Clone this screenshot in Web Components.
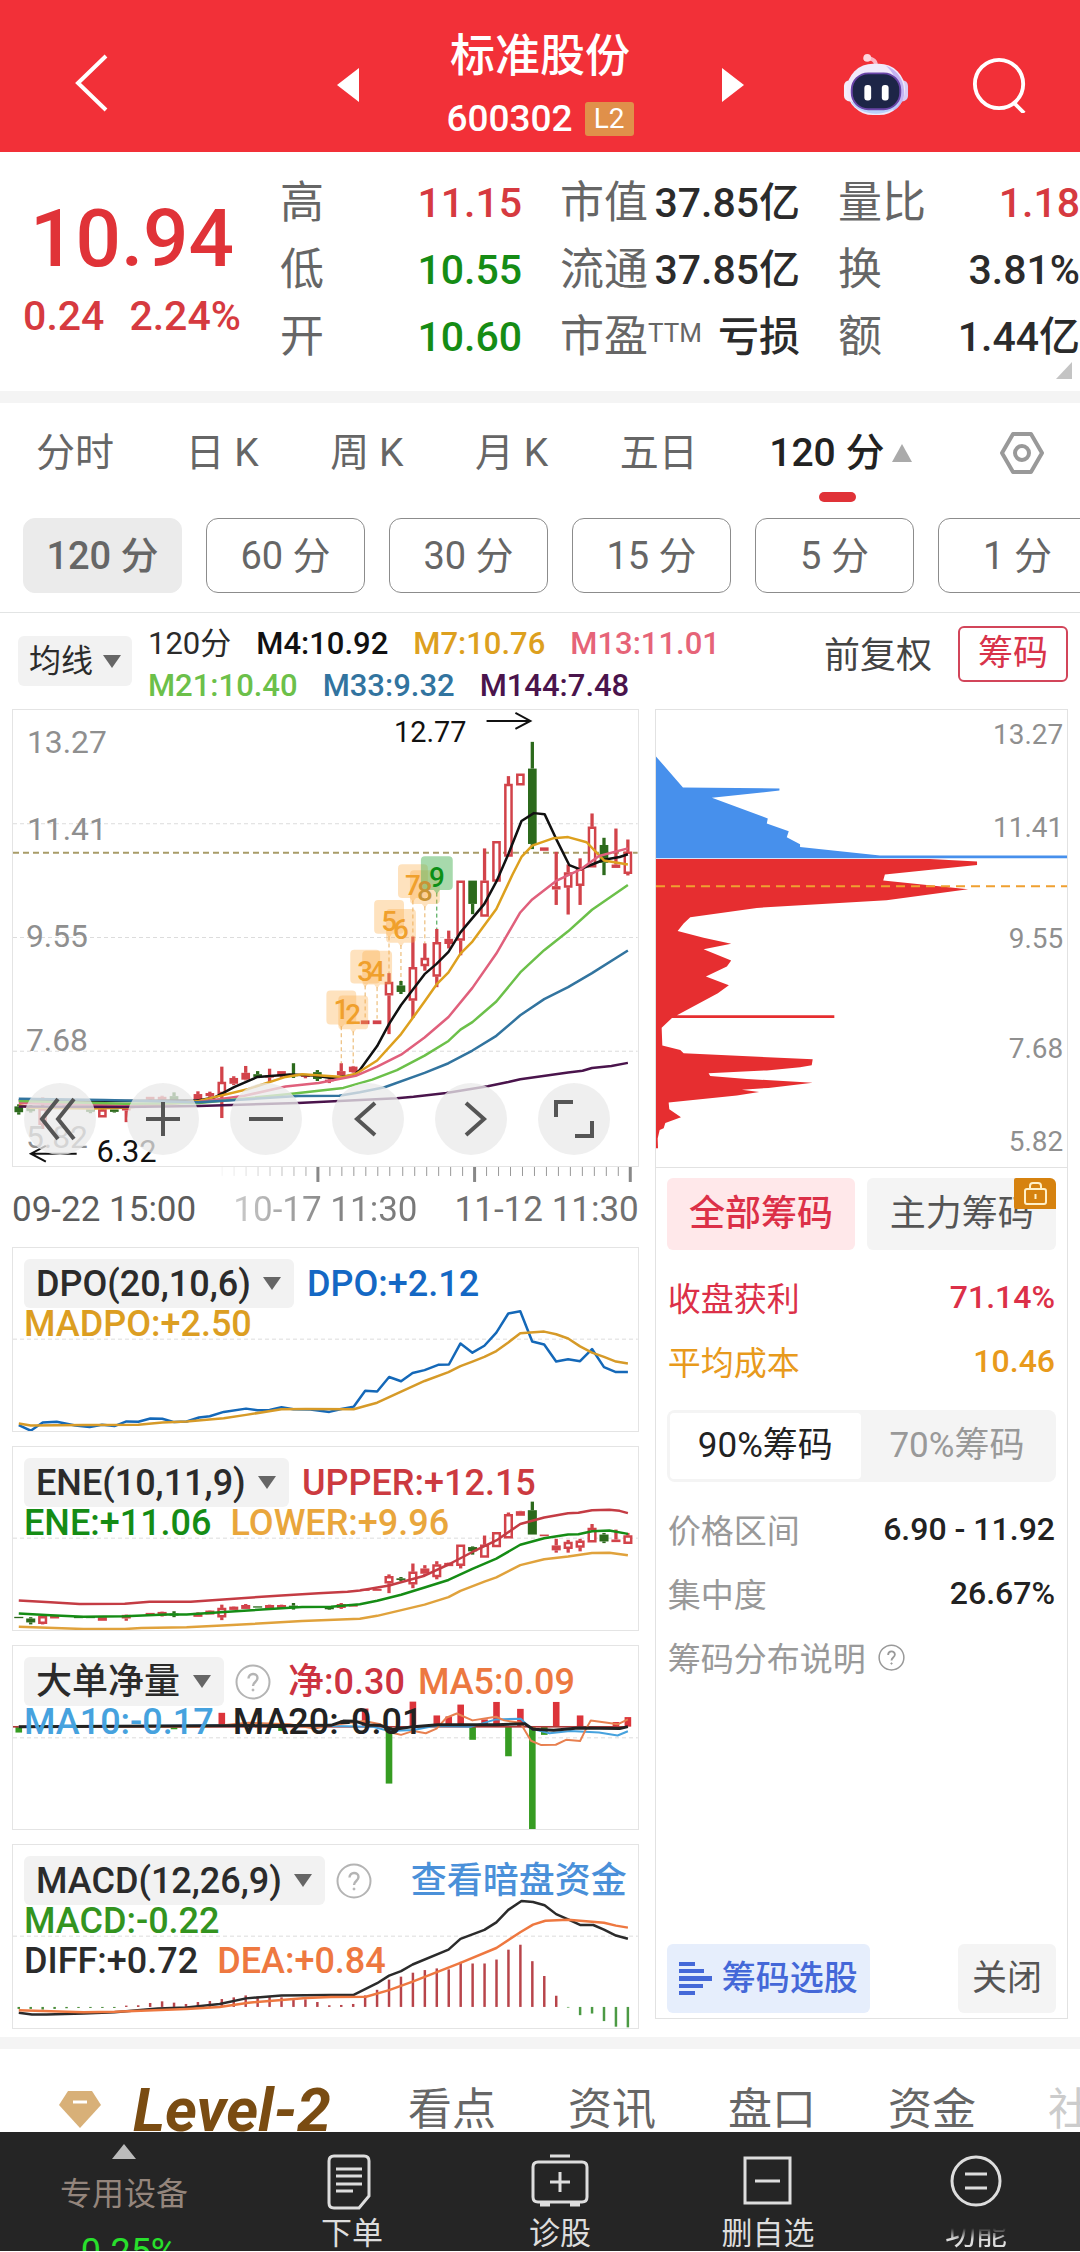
<!DOCTYPE html>
<html lang="zh-CN">
<head>
<meta charset="utf-8">
<meta name="viewport" content="width=device-width, initial-scale=1">
<title>标准股份 600302</title>
<style>
  html { background: #fff; }
  body {
    margin: 0;
    font-family: Roboto, "Noto Sans CJK SC", sans-serif;
    color: #2b2b2b;
    overflow-x: hidden;
  }
  .workspace { display: flex; gap: 16px; padding: 0 12px 0 12px; }
  .left { flex: 628 1 0; min-width: 0; display: flex; flex-direction: column; }
  .panels { display: flex; flex-direction: column; gap: 14px; }
  chip-panel { flex: 412 1 0; min-width: 0; margin-bottom: 10px; }
  .band { height: 12px; background: #f4f4f4; }
  .workspace + .band { margin-top: 8px; }
</style>
</head>
<body>
<app-header name="标准股份" code="600302"></app-header>
<quote-board></quote-board>
<div class="band"></div>
<period-tabs></period-tabs>
<period-pills></period-pills>
<ma-legend></ma-legend>
<div class="workspace">
  <div class="left">
    <k-chart></k-chart>
    <time-axis></time-axis>
    <div class="panels">
      <indicator-panel kind="dpo" name="DPO(20,10,6)">
        <span slot="first" style="color:#1468c4">DPO:+2.12</span>
        <span slot="second" style="color:#dc9e22">MADPO:+2.50</span>
      </indicator-panel>
      <indicator-panel kind="ene" name="ENE(10,11,9)">
        <span slot="first" style="color:#cc3a40">UPPER:+12.15</span>
        <span slot="second" style="color:#158c15">ENE:+11.06</span>
        <span slot="second" style="color:#e9a63c">LOWER:+9.96</span>
      </indicator-panel>
      <indicator-panel kind="net" name="大单净量" help>
        <span slot="first" style="color:#cc3340">净:0.30</span>
        <span slot="first" style="color:#ec7840">MA5:0.09</span>
        <span slot="second" style="color:#46a2de">MA10:-0.17</span>
        <span slot="second" style="color:#222">MA20:-0.01</span>
      </indicator-panel>
      <indicator-panel kind="macd" name="MACD(12,26,9)" help>
        <a slot="first" href="#dark" style="color:#4a90d9;text-decoration:none;margin-left:auto">查看暗盘资金</a>
        <span slot="second" style="color:#33941f">MACD:-0.22</span>
        <span slot="third" style="color:#2b2b2b">DIFF:+0.72</span>
        <span slot="third" style="color:#ee7840">DEA:+0.84</span>
      </indicator-panel>
    </div>
  </div>
  <chip-panel></chip-panel>
</div>
<div class="band"></div>
<section-tabs></section-tabs>
<bottom-nav></bottom-nav>

<script>
const base = `<style>
  :host, *, *::before, *::after { box-sizing: border-box; }
  :host { display: block; }
  button { font: inherit; color: inherit; background: none; border: 0; padding: 0; margin: 0; cursor: pointer; white-space: nowrap; }
  a { color: inherit; text-decoration: none; }
  svg { display: block; }
</style>`;

function define(name, render) {
  customElements.define(name, class extends HTMLElement {
    constructor() { super(); this.attachShadow({ mode: 'open' }); }
    connectedCallback() { this.shadowRoot.innerHTML = base + render(this); }
  });
}

/* ---- drawing helpers: candles sit on a fixed step along x ---- */
const STEP = 28.96, FIRST = 43;
const cx = i => FIRST + STEP * i;
const RED = '#d2434a', GREEN = '#2c6a1c';
function candles(list, w) {
  return list.map(([i, t, hi, top, bot, lo]) => {
    const x = cx(i), c = t === 'g' ? GREEN : RED, h = Math.max(bot - top, 3);
    let s = '';
    if (hi < top) s += `<rect x="${x - 4}" y="${hi}" width="8" height="${top - hi}" fill="${c}"/>`;
    if (lo > bot) s += `<rect x="${x - 4}" y="${bot}" width="8" height="${lo - bot}" fill="${c}"/>`;
    s += t === 'r'
      ? `<rect x="${x - w / 2 + 3}" y="${top + 3}" width="${w - 6}" height="${Math.max(h - 6, 2)}" fill="#fff" stroke="${c}" stroke-width="2.500" vector-effect="non-scaling-stroke"/>`
      : `<rect x="${x - w / 2}" y="${top}" width="${w}" height="${h}" fill="${c}"/>`;
    return s;
  }).join('');
}
const line = (pts, color, w = 2.500) =>
  `<polyline points="${pts}" fill="none" stroke="${color}" stroke-width="${w}" stroke-linejoin="round" vector-effect="non-scaling-stroke"/>`;
const grid = (y, color = '#dcdcdc', w = 1, dash = '4 3') =>
  `<line x1="29" x2="1544" y1="${y}" y2="${y}" stroke="${color}" stroke-width="${w}" stroke-dasharray="${dash}" vector-effect="non-scaling-stroke"/>`;
const helpIcon = size =>
  `<svg class="help" width="${size}" height="${size}" viewBox="0 0 36 36" fill="none" stroke="currentColor" stroke-width="2"><circle cx="18" cy="18" r="16.5"/><path d="M13.500 14.500c0-6 9-6 9-.5 0 4-4.500 4-4.500 8" stroke-width="2.400"/><circle cx="18" cy="26" r="1" fill="currentColor" stroke-width="1"/></svg>`;

define('app-header', el => `
<style>
  :host { background: #f23038; color: #fff; height: 152px; display: grid; grid-template-columns: 1fr 407px 1fr; align-items: center; padding: 18px 52px 0; }
  .back { justify-self: start; padding: 0 0 4px 18px; }
  .mid { display: flex; justify-content: space-between; align-items: center; }
  h1 { margin: 0; font-size: 45px; line-height: 64px; font-weight: 500; text-align: center; }
  .t { display: flex; flex-direction: column; align-items: center; gap: 4px; }
  .code { display: flex; gap: 12px; align-items: center; font-size: 37px; line-height: 52px; font-weight: 500; }
  .l2 { background: #e0904a; font-size: 28px; line-height: 34px; width: 49px; text-align: center; border-radius: 3px; font-weight: 400; }
  .tools { justify-self: end; display: flex; gap: 63px; align-items: center; }
</style>
<button class="back" aria-label="返回"><svg width="40" height="60" viewBox="0 0 40 60" fill="none" stroke="#fff" stroke-width="4"><path d="M36 3 8 30 36 57"/></svg></button>
<div class="mid">
  <button aria-label="上一只"><svg width="22" height="34" viewBox="0 0 22 34"><path d="M22 0v34L0 17z" fill="#fff"/></svg></button>
  <div class="t"><h1>${el.getAttribute('name')}</h1><div class="code"><span>${el.getAttribute('code')}</span><span class="l2">L2</span></div></div>
  <button aria-label="下一只"><svg width="22" height="34" viewBox="0 0 22 34"><path d="M0 0v34L22 17z" fill="#fff"/></svg></button>
</div>
<div class="tools">
  <button aria-label="助手"><svg width="66" height="64" viewBox="0 0 68 64">
    <path d="M34 12c0-6-5-8-11-7" fill="none" stroke="#fbb3c3" stroke-width="4" stroke-linecap="round"/><circle cx="25" cy="4" r="4" fill="#fdd5dd"/>
    <rect x="1" y="27" width="12" height="22" rx="6" fill="#f5eefb"/><rect x="55" y="27" width="12" height="22" rx="6" fill="#d9ccf5"/>
    <rect x="4" y="10" width="60" height="53" rx="27" fill="#f1eafb"/><path d="M44 12c14 5 20 18 19 30-1 8-6 14-12 17 8-14 8-34-7-47z" fill="#c4b4f2"/><path d="M8 48c7 18 45 18 52 0-10 9-42 9-52 0" fill="#b9d0fa"/>
    <rect x="9" y="20" width="50" height="37" rx="17" fill="#1d2547" stroke="#6a45a8" stroke-width="2"/>
    <rect x="22" y="32" width="7" height="16" rx="3" fill="#fff"/><rect x="40" y="32" width="7" height="16" rx="3" fill="#fff"/></svg></button>
  <button aria-label="搜索"><svg width="56" height="56" viewBox="0 0 58 58" fill="none" stroke="#fff" stroke-width="4"><circle cx="28" cy="28" r="25"/><path d="M43 47 54 58"/></svg></button>
</div>`);

define('quote-board', () => {
  const cell = (k, v, c = '#2b2b2b') => `<div class="cell"><span class="k">${k}</span><span class="v" style="color:${c}">${v}</span></div>`;
  const r = '#d63a40', g = '#158c15';
  return `
<style>
  :host { display: grid; grid-template-columns: 264px 1fr; height: 239px; padding-top: 18px; position: relative; }
  .price { text-align: center; color: #e03338; }
  .price b { display: block; font-size: 80px; line-height: 90px; font-weight: 500; padding-top: 24px; }
  .chg { display: flex; justify-content: center; gap: 25px; font-size: 41px; line-height: 60px; color: #d63a40; padding-top: 2px; font-weight: 500; }
  .tbl { display: grid; grid-template-columns: 242px 240px 242px; justify-content: end; column-gap: 38px; grid-auto-rows: 67px; }
  .cell { display: flex; justify-content: space-between; line-height: 67px; white-space: nowrap; }
  .k { font-size: 44px; color: #666; } .v { font-size: 41px; font-weight: 500; }
  sup { font-size: 26px; line-height: 1; vertical-align: 10px; }
  .corner { position: absolute; right: 8px; bottom: 12px; }
</style>
<div class="price"><b>10.94</b><div class="chg"><span>0.24</span><span>2.24%</span></div></div>
<div class="tbl">
${cell('高', '11.15', r)}${cell('市值', '37.85亿')}${cell('量比', '1.18', r)}
${cell('低', '10.55', g)}${cell('流通', '37.85亿')}${cell('换', '3.81%')}
${cell('开', '10.60', g)}${cell('市盈<sup>TTM</sup>', '亏损')}${cell('额', '1.44亿')}
</div>
<svg class="corner" width="16" height="17" viewBox="0 0 16 17"><path d="M16 0v17H0z" fill="#c4c4c4"/></svg>`;
});

define('period-tabs', () => `
<style>
  :host { display: flex; align-items: flex-start; justify-content: space-between; padding: 20px 36px 0 36px; font-size: 39px; line-height: 60px; color: #666; height: 115px; }
  button.on { color: #222; font-weight: 500; display: grid; grid-template-columns: auto 20px; column-gap: 8px; align-items: center; }
  button.on i { grid-column: 1 / -1; justify-self: center; width: 37px; height: 10px; border-radius: 5px; background: #e03238; margin: 9px 6px 0 0; }
  .set { padding-top: 8px; margin-left: 16px; }
</style>
<button>分时</button><button>日 K</button><button>周 K</button><button>月 K</button><button>五日</button>
<button class="on"><span>120 分</span><svg width="20" height="18" viewBox="0 0 20 18"><path d="M10 0 20 18H0z" fill="#aaa"/></svg><i></i></button>
<button class="set" aria-label="设置"><svg width="44" height="44" viewBox="0 0 44 44" fill="none" stroke="#999" stroke-width="4"><path d="M13 3h18l11 19-11 19H13L2 22z" stroke-linejoin="round"/><circle cx="22" cy="22" r="7"/></svg></button>`);

define('period-pills', () => `
<style>
  :host { display: flex; gap: 24px; padding: 0 0 19px 23px; overflow: hidden; border-bottom: 1px solid #e2e4e4; }
  button { flex: 0 0 159px; height: 75px; border: 1px solid #8c8c8c; border-radius: 12px; font-size: 38px; line-height: 75px; color: #666; }
  .on { background: #ebebeb; border-color: #ebebeb; font-weight: 500; }
</style>
${['120 分', '60 分', '30 分', '15 分', '5 分', '1 分'].map((t, i) => `<button class="${i ? '' : 'on'}">${t}</button>`).join('')}`);

const picker = (name, opts = '') => `<label class="pick ${opts}"><select aria-label="${name}"><option>${name}</option></select><svg width="18" height="13" viewBox="0 0 18 13"><path d="M0 0h18L9 13z" fill="#666"/></svg></label>`;
const pickerCss = `
  .pick { display: grid; align-items: center; }
  .pick > * { grid-area: 1 / 1; }
  .pick select { appearance: none; font: inherit; color: #2b2b2b; border: 0; border-radius: 6px; background: #f2f2f2; margin: 0; }
  .pick svg { justify-self: end; margin-right: 13px; pointer-events: none; }`;

define('ma-legend', () => `
<style>${pickerCss}
  :host { display: flex; align-items: flex-start; height: 96px; padding: 10px 12px 0 18px; }
  .pick { font-size: 32px; line-height: 50px; padding-top: 13px; }
  .pick select { height: 50px; padding: 0 38px 0 11px; }
  .pick svg { margin-right: 11px; }
  .ma { flex: 1; display: flex; flex-wrap: wrap; column-gap: 25px; font-size: 31px; line-height: 42px; margin-left: 16px; font-weight: 500; max-width: 600px; }
  .adj { font-size: 36px; line-height: 60px; color: #444; margin-left: auto; padding-top: 3px; }
  .chip { margin: 3px 0 0 26px; width: 110px; height: 56px; border: 2px solid #d2455a; border-radius: 6px; font-size: 35px; line-height: 50px; color: #d8334a; }
</style>
${picker('均线')}
<div class="ma"><span style="font-weight:400">120分</span><span style="color:#111">M4:10.92</span><span style="color:#dda01e">M7:10.76</span><span style="color:#e66478">M13:11.01</span>
<span style="color:#6cc04a">M21:10.40</span><span style="color:#32749f">M33:9.32</span><span style="color:#4a144c">M144:7.48</span></div>
<button class="adj">前复权</button><button class="chip">筹码</button>`);

define('k-chart', () => {
  const W = 1515, H = 1330;
  const lx = x => Math.round((x - 29) * 628 / W), ly = y => Math.round((y - 29) * 458 / H);
  const marks = [[27, 1, 847, 933, 1060], [28, 2, 862, 948, 1068], [29, 3, 728, 820, 930], [30, 4, 733, 820, 930], [31, 5, 585, 673, 797], [32, 6, 610, 697, 820], [33, 7, 480, 568, 690], [34, 8, 497, 587, 710], [35, 9, 457, 547, 668]];
  const k = [[0,'g',1180,1186,1203,1210],[1,'g',1182,1188,1200,1204],[2,'r',1160,1192,1240,1252],[4,'R',1180,1183,1192,1196],[6,'g',1190,1194,1202,1206],[7,'r',1192,1195,1218,1218],[8,'g',1195,1195,1202,1204],[9,'R',1188,1192,1198,1232],
    [11,'R',1158,1158,1166,1170],[12,'R',1155,1158,1166,1168],[13,'g',1145,1156,1168,1170],[15,'R',1142,1150,1165,1168],[16,'R',1143,1147,1156,1162],[17,'r',1070,1115,1150,1220],[18,'R',1098,1103,1120,1124],[19,'R',1068,1088,1108,1110],[20,'g',1083,1092,1100,1103],[21,'R',1076,1096,1102,1115],[22,'R',1083,1083,1098,1103],[23,'g',1060,1092,1098,1103],[24,'R',1092,1092,1100,1104],[25,'g',1080,1086,1106,1112],[26,'R',1105,1108,1113,1118],[27,'R',1060,1083,1095,1098],[28,'R',1068,1070,1086,1088],[29,'R',935,935,946,946],[30,'R',935,935,946,946],
    [31,'r',797,823,862,975],[32,'g',820,833,852,858],[33,'r',690,780,877,928],[34,'r',710,753,776,790],[35,'r',668,707,807,838],[36,'R',673,697,712,725],[37,'r',527,527,702,745],[38,'g',527,527,595,625],[39,'r',433,527,632,632],[40,'r',412,412,530,530],[41,'r',222,245,457,457],[42,'r',215,215,249,249],[43,'g',122,200,420,435],[44,'R',430,430,440,440],[45,'R',443,543,553,598],[46,'r',480,503,547,626],[47,'r',462,492,542,598],[48,'r',331,370,488,488],[49,'g',402,423,475,511],[50,'R',375,480,490,490],[51,'r',407,443,507,512]];
  const ax = (x, y, t, s = '#8f8f8f', f = 32, w = 400) => `<text x="${x}" y="${y}" fill="${s}" font-size="${f}" font-weight="${w}">${t}</text>`;
  return `
<style>
  :host { display: grid; border: 1px solid #e4e4e4; }
  :host > * { grid-area: 1 / 1; }
  svg.plot { width: 100%; height: auto; }
  text { font-family: Roboto, sans-serif; }
  .ctl { align-self: end; display: flex; justify-content: space-between; padding: 0 28px 11px 11px; }
  .ctl button { width: 72px; height: 72px; border-radius: 50%; background: rgba(234,234,234,.76); display: grid; place-items: center; }
</style>
<svg class="plot" viewBox="0 0 628 458">
  <svg viewBox="29 29 ${W} ${H}" width="628" height="458" preserveAspectRatio="none">
    ${grid(361)}${grid(693)}${grid(1025)}${grid(446, '#a89c68', 2, '6 4')}
    ${candles(k, 21)}
    ${line('43,1168 300,1170 480,1168 518,1160 565,1130 622,1100 700,1093 760,1096 800,1103 855,1095 870,1080 912,1010 941,945 970,890 1027,800 1056,770 1085,735 1114,678 1172,595 1201,530 1230,450 1262,353 1292,330 1318,333 1346,405 1378,482 1404,494 1433,480 1462,466 1500,458 1520,450', '#111')}
    ${line('43,1182 72,1190 220,1192 300,1190 480,1170 600,1135 690,1100 730,1092 830,1100 862,1090 912,1052 970,975 1027,880 1056,830 1085,795 1114,740 1143,705 1201,610 1240,510 1262,458 1288,425 1340,403 1375,400 1420,415 1462,468 1520,480', '#dda01e')}
    ${line('43,1176 300,1184 480,1173 590,1155 690,1128 770,1118 860,1097 912,1070 970,1035 1027,985 1085,925 1143,840 1201,740 1259,620 1288,582 1346,528 1404,495 1450,455 1520,433', '#e0607c')}
    ${line('43,1170 300,1178 480,1176 600,1162 700,1150 830,1132 900,1108 960,1080 1027,1038 1085,995 1114,962 1143,940 1201,880 1259,795 1317,730 1375,675 1433,612 1520,540', '#6cc04a')}
    ${line('43,1164 250,1167 480,1174 600,1165 720,1156 820,1155 870,1145 930,1130 1027,1088 1085,1060 1143,1023 1201,980 1259,920 1317,873 1375,838 1433,797 1520,731', '#32749f')}
    ${line('43,1186 300,1188 480,1185 720,1176 820,1170 960,1162 1000,1158 1080,1147 1180,1127 1230,1115 1259,1107 1375,1087 1410,1082 1433,1074 1480,1068 1520,1059', '#4a144c')}
    ${marks.map(([i, n, t, b, e]) => `<line x1="${cx(i)}" x2="${cx(i)}" y1="${t + 105}" y2="${e}" stroke="${n === 9 ? '#2f9a3a' : '#e8b060'}" stroke-width="1" stroke-dasharray="4 3" vector-effect="non-scaling-stroke"/>`).join('')}
  </svg>
  ${marks.map(([i, n, t, b]) => {
    const x = lx(cx(i)), y = ly(t), w = n === 9 ? 16 : 15;
    return `<path d="M${x - w} ${y + 4}q0-4 4-4h${2 * w - 8}q4 0 4 4v26q0 4-4 4h-${w - 7}l-3 4-3-4h-${w - 7}q-4 0-4-4z" fill="${n === 9 ? '#4fb35a' : '#fbb04c'}" opacity="${n === 9 ? .5 : .36}"/>`;
  }).join('')}
  ${marks.map(([i, n, t, b]) => `<text x="${lx(cx(i))}" y="${ly(b)}" text-anchor="middle" font-size="28" font-weight="500" fill="${n === 9 ? '#0c8f16' : n === 8 ? '#c99434' : '#f0a02c'}">${n}</text>`).join('')}
  ${ax(14, 43, '13.27')}${ax(14, 131, '11.41')}${ax(13, 238, '9.55')}${ax(13, 343, '7.68')}${ax(13, 440, '5.82')}
  ${ax(383, 32, '12.77', '#111', 29)}${ax(84, 454, '6.32', '#111', 31)}
  <path d="M476 11h44M505 3l15 8-15 8M64 446H18M33 438l-15 8 15 8" fill="none" stroke="#111" stroke-width="2"/>
</svg>
<div class="ctl">
  ${[['快退', 'M34 16 18 36l16 20M50 16 34 36l16 20'], ['放大', 'M19 36h34M36 19v34'], ['缩小', 'M19 36h34'], ['左移', 'M43 20 25 36l18 16'], ['右移', 'M31 20 49 36 31 52'], ['全屏', 'M18 34V19h17M54 38v15H37']]
    .map(([n, d]) => `<button aria-label="${n}"><svg width="72" height="72" viewBox="0 0 72 72" fill="none" stroke="#555" stroke-width="4"><path d="${d}"/></svg></button>`).join('')}
</div>`;
});

define('time-axis', () => {
  let t = '';
  for (let i = 17; i < 52; i++) {
    const major = i === 25 || i === 38 || i === 51;
    t += `<rect x="${Math.round(6 + 12.016 * i) - (major ? 1 : 0)}" y="0" width="${major ? 3 : 1}" height="${major ? 15 : 9}" fill="${major ? '#888' : '#999'}" opacity="${major ? 1 : Math.min(1, .1 + (i - 17) * .1)}"/>`;
  }
  return `
<style>
  :host { height: 80px; }
  svg { width: 100%; height: auto; }
  div { display: flex; justify-content: space-between; font-size: 35px; line-height: 56px; color: #5c5c5c; }
  span:nth-child(2) { background: linear-gradient(90deg, #ccc, #888 50%, #777); -webkit-background-clip: text; background-clip: text; color: transparent; }
  span:nth-child(3) { color: #707070; }
</style>
<svg viewBox="0 0 628 15">${t}</svg>
<div><span>09-22 15:00</span><span>10-17 11:30</span><span>11-12 11:30</span></div>`;
});

const PLOTS = {
  dpo: { top: 53, draw: () =>
    grid(330) +
    line('43,591 72,608 101,583 135,581 180,592 215,597 245,590 275,594 304,580 333,581 362,571 391,572 420,582 450,580 480,568 506,564 540,551 594,541 622,546 651,545 680,537 709,543 750,544 796,551 825,542 855,535 883,487 912,489 941,445 970,458 998,433 1027,424 1060,408 1086,407 1114,343 1143,371 1172,350 1201,310 1230,252 1259,245 1288,337 1317,346 1346,398 1375,391 1404,397 1433,360 1462,415 1491,430 1520,430', '#1468b8') +
    line('43,586 72,592 200,591 333,590 391,583 450,580 540,570 594,560 680,543 740,542 855,543 883,533 912,523 1027,457 1085,430 1114,412 1143,398 1172,384 1201,366 1230,340 1259,312 1317,307 1346,315 1375,328 1404,352 1433,371 1462,384 1491,398 1520,404', '#d69a28') },
  ene: { top: 651, draw: () =>
    grid(928) +
    candles([[0,'g',1167,1167,1171,1171],[1,'g',1168,1172,1184,1190],[2,'r',1163,1165,1188,1190],[3,'R',1163,1163,1172,1172],[5,'g',1166,1166,1171,1171],[6,'g',1166,1166,1171,1171],[7,'R',1168,1168,1179,1179],[9,'R',1160,1161,1172,1179],[11,'R',1155,1155,1163,1163],[12,'R',1151,1152,1164,1166],[13,'g',1150,1157,1163,1168],[15,'R',1153,1155,1167,1167],[16,'R',1147,1148,1160,1160],[17,'r',1130,1140,1168,1177],[18,'R',1135,1136,1146,1146],[19,'R',1128,1131,1143,1143],[20,'g',1135,1135,1139,1139],[21,'R',1130,1131,1142,1142],[22,'R',1130,1131,1142,1142],[23,'g',1125,1133,1139,1145],[26,'g',1136,1138,1144,1146],[27,'R',1125,1128,1140,1143],[28,'R',1129,1129,1136,1136],[29,'R',1082,1082,1088,1088],[30,'R',1082,1082,1088,1088],[31,'r',1038,1044,1065,1095],[32,'g',1046,1050,1055,1058],[33,'r',1005,1030,1068,1080],[34,'R',1010,1020,1036,1043],[35,'r',998,1008,1046,1053],[36,'R',1002,1003,1013,1013],[37,'r',948,948,1012,1020],[38,'g',953,955,968,978],[39,'r',920,948,987,987],[40,'r',910,910,955,955],[41,'r',850,855,928,928],[42,'R',845,846,860,860],[43,'g',817,843,917,917],[44,'R',917,917,922,922],[45,'R',930,950,965,972],[46,'r',933,940,960,972],[47,'r',930,936,956,968],[48,'r',885,897,940,940],[49,'g',912,917,938,943],[50,'R',902,932,940,940],[51,'r',912,920,945,945]], 22) +
    line('43,1117 120,1123 190,1128 300,1127 360,1121 460,1121 600,1109 680,1102 770,1095 840,1091 870,1087 941,1072 1027,1042 1085,1008 1143,970 1201,935 1259,885 1317,865 1375,852 1400,851 1433,843 1475,842 1500,845 1520,852', '#c43c44') +
    line('43,1157 120,1162 200,1167 300,1165 400,1160 450,1160 560,1151 730,1137 800,1136 870,1129 912,1118 970,1100 1027,1078 1085,1055 1143,1021 1201,990 1259,948 1317,928 1375,917 1400,916 1433,907 1475,905 1520,915', '#158c15') +
    line('43,1197 200,1204 300,1204 340,1201 450,1199 560,1192 730,1180 870,1173 912,1164 1027,1130 1085,1107 1114,1088 1172,1060 1201,1047 1259,1010 1317,992 1375,984 1433,973 1475,972 1520,980', '#e0a23c') },
  net: { top: 17, draw: () => {
    const bars = [[17,220],[29,207],[33,186],[35,228],[36,231],[37,195],[39,240],[40,187],[42,208],[45,187],[47,228],[50,248],[51,233],[0,280],[13,270],[22,275],[31,435],[38,302],[41,352],[43,573],[44,287]];
    return grid(296) + bars.map(([i, y]) => `<rect x="${cx(i) - 8}" y="${Math.min(y, 262)}" width="16" height="${Math.abs(y - 262)}" fill="${y < 262 ? '#dc343a' : '#369c22'}"/>`).join('') +
      `<rect x="29" y="260" width="1490" height="5" fill="#b03a3a"/>` +
      line('43,263 520,258 800,260 900,262 941,275 1000,272 1050,260 1140,262 1200,240 1260,238 1285,268 1330,282 1380,275 1450,280 1495,289 1520,276', '#46a2de', 2) +
      line('43,262 500,262 600,250 700,255 760,268 800,258 880,245 920,255 945,280 970,287 1000,275 1030,282 1056,268 1080,235 1105,222 1143,243 1200,232 1220,243 1259,250 1285,305 1310,318 1345,317 1370,302 1404,306 1420,265 1430,243 1470,250 1495,255 1520,240', '#e88050', 2) +
      line('43,262 400,260 800,258 830,245 860,246 890,258 920,258 950,271 1000,262 1060,256 1200,256 1270,253 1290,270 1340,273 1400,266 1500,268 1520,262', '#222', 3);
  } },
  macd: { top: 615, draw: () => {
    const up = [1103,1102,1095,1090,1094,1098,1092,1089,1083,1078,1072,1075,1077,1078,1080,1084,1092,1102,1101,1098,1072,1055,1024,1015,1003,995,990,993,970,975,975,963,933,918,968,1013,1073];
    const down = [1113,1113,1115,1113,1111,1110,1110,1110,1110];
    const tail = [1109,1132,1127,1150,1167,1169];
    const bar = (i, a, b, c) => `<rect x="${cx(i) - 3}" y="${a}" width="6" height="${b - a}" fill="${c}"/>`;
    return grid(892) + up.map((y, n) => bar(n + 9, y, 1107, '#b8444a')).join('') +
      down.map((y, n) => bar(n, 1107, y, '#4a8c3a')).join('') + tail.map((y, n) => bar(n + 46, 1107, y, '#4c9a44')).join('') +
      line('43,1125 75,1130 110,1130 200,1127 275,1123 380,1112 450,1109 530,1098 594,1081 680,1072 855,1070 912,1035 941,1012 970,998 998,978 1085,933 1114,900 1172,873 1201,850 1230,812 1262,785 1290,788 1318,798 1346,825 1375,841 1404,858 1436,858 1462,872 1491,890 1520,900', '#2b2b2b') +
      line('43,1117 200,1123 275,1122 450,1113 530,1107 600,1094 740,1080 800,1077 885,1076 941,1056 998,1030 1114,973 1201,928 1259,880 1290,857 1320,845 1375,842 1404,845 1462,851 1491,860 1520,866', '#ee7840');
  } }
};

define('indicator-panel', el => {
  const p = PLOTS[el.getAttribute('kind')];
  return `
<style>${pickerCss}
  :host { display: grid; height: 185px; border: 1px solid #e4e4e4; }
  :host > * { grid-area: 1 / 1; min-width: 0; }
  .plot { width: 100%; height: 183px; }
  .head { padding: 16px 11px 0 11px; font-size: 36px; line-height: 40px; font-weight: 500; white-space: nowrap; }
  .row { display: flex; height: 40px; align-items: center; }
  .row { gap: 19px; }
  .first { gap: 13px; }
  .pick select { height: 49px; padding: 0 43px 0 12px; }
  .help { color: #b4b4b4; flex: none; margin: 0 4px 0 -2px; }
  ::slotted(*) { flex: none; }
</style>
<svg class="plot" viewBox="29 ${p.top} 1515 556" preserveAspectRatio="none">${p.draw()}</svg>
<div class="head">
  <div class="row first">${picker(el.getAttribute('name'))}${el.hasAttribute('help') ? helpIcon(36) : ''}<slot name="first"></slot></div>
  <div class="row"><slot name="second"></slot></div>
  <div class="row"><slot name="third"></slot></div>
</div>`;
});

define('chip-panel', () => {
  const row = (k, v, c = '') => `<div class="row ${c}"><span>${k}</span><b>${v}</b></div>`;
  const lab = (y, t) => `<text x="408" y="${y}">${t}</text>`;
  return `
<style>
  :host { border: 1px solid #e2e2e2; display: flex; flex-direction: column; }
  .plot { width: 100%; height: auto; border-bottom: 1px solid #e2e2e2; }
  text { font: 28px Roboto, sans-serif; fill: #8f8f8f; text-anchor: end; }
  .body { padding: 10px 11px 5px; display: flex; flex-direction: column; flex: 1; }
  .kinds { display: grid; grid-template-columns: 1fr 1fr; gap: 12px; font-size: 36px; line-height: 72px; }
  .kinds button { border-radius: 6px; background: #f4f4f4; color: #555; position: relative; }
  .kinds .on { background: #ffe8ea; color: #dc3048; font-weight: 500; }
  .lock { position: absolute; right: 0; top: 0; background: #d6820f; border-radius: 2px 6px 0 2px; }
  .row { display: flex; justify-content: space-between; align-items: center; height: 64px; font-size: 33px; white-space: nowrap; color: #999; }
  .row b { font-weight: 500; font-size: 32px; color: #222; }
  .row.gain, .row.gain b { color: #dc3048; }
  .row.cost, .row.cost b { color: #e89a1c; }
  .stats { padding: 15px 1px 0 1px; }
  .seg { display: grid; grid-template-columns: 191px 1fr; background: #f4f4f4; border-radius: 8px; padding: 3px; margin-top: 17px; font-size: 35px; line-height: 66px; color: #999; }
  .seg .on { background: #fff; color: #222; border-radius: 4px; }
  .note { justify-content: flex-start; gap: 12px; }
  .foot { margin-top: auto; display: flex; justify-content: space-between; font-size: 34px; line-height: 69px; }
  .pick { background: #e6eefc; color: #4468d8; border-radius: 6px; padding: 0 12px; display: flex; align-items: center; gap: 10px; font-weight: 500; }
  .close { background: #f4f4f4; color: #555; border-radius: 6px; width: 98px; font-size: 35px; }
</style>
<svg class="plot" viewBox="0 0 412 458">
  <svg viewBox="47 30 1236 1328" width="412" height="458" preserveAspectRatio="none">
    <path fill="#4790ec" d="M47 165 128 255 418 258v6L215 285 383 345l-3 15 66 22-6 18 40 20v8l120 12 120 13H1283v8H47z"/>
    <path fill="#e62e30" d="M47 463H870L1012 470v10L735 508l-5 17 255 26-245 32-390 22-200 27-20 18-18 22 78 20 83 17-83 16 83 33-13 17-63 29 69 26-33 23-123 64H583v8H95L64 953l2 52 54 13 10 9 388 18-3 17-35 6-100 9-175 8 5 8 110 9 198 11-133 15-80 5 52 7-67 10-205 20 2 20 35 23-47 17-5 15-12 5-6 25 1 28H47z"/>
    <path d="M47 542H1283" stroke="#f0a030" stroke-width="2" stroke-dasharray="9 6" vector-effect="non-scaling-stroke"/>
  </svg>
  ${lab(34, '13.27')}${lab(127, '11.41')}${lab(238, '9.55')}${lab(349, '7.68')}${lab(442, '5.82')}
</svg>
<div class="body">
  <div class="kinds"><button class="on">全部筹码</button><button>主力筹码<svg class="lock" width="42" height="31" viewBox="0 0 42 31" fill="none" stroke="#fff0c8" stroke-width="2"><rect x="11" y="11" width="21" height="15" rx="2"/><path d="M16 11V8q0-3 3-3h5q3 0 3 3v3M21.500 16v5"/></svg></button></div>
  <div class="stats">${row('收盘获利', '71.14%', 'gain')}${row('平均成本', '10.46', 'cost')}</div>
  <div class="seg"><button class="on">90%筹码</button><button>70%筹码</button></div>
  <div class="stats">${row('价格区间', '6.90 - 11.92')}${row('集中度', '26.67%')}<div class="row note"><span>筹码分布说明</span>${helpIcon(27)}</div></div>
  <div class="foot"><button class="pick"><svg width="33" height="33" viewBox="0 0 33 33" fill="#4468d8"><path d="M0 0h16v4H0zM0 7h25v4H0zM0 14h33v5H0zM0 22h24v4H0zM0 29h16v4H0z"/></svg>筹码选股</button><button class="close">关闭</button></div>
</div>`;
});

define('section-tabs', () => `
<style>
  :host { display: flex; height: 83px; padding: 28px 0 0 59px; overflow: hidden; font-size: 44px; line-height: 66px; color: #666; align-items: flex-start; }
  .lv { display: flex; gap: 32px; width: 349px; flex: none; align-items: center; font-size: 61px; line-height: 66px; font-weight: 700; font-style: italic; color: #7a4c12; }
  .t { flex: 0 0 160px; text-align: left; }
  .t:last-child { color: #ccc; }
</style>
<button class="lv"><svg width="42" height="37" viewBox="0 0 42 37"><path d="M9 0h24l9 14-21 23L0 14z" fill="#d8b078"/><path d="M14 11h14" stroke="#fff" stroke-width="3"/></svg>Level-2</button>
${['看点', '资讯', '盘口', '资金', '社'].map(t => `<button class="t">${t}</button>`).join('')}`);

define('bottom-nav', () => {
  const ic = {
    '下单': '<path d="M12 3h30q5 0 5 5v35l-10 12H12q-5 0-5-5V8q0-5 5-5zM14 16h26M14 23h26M14 31h26M14 38h17"/>',
    '诊股': '<path d="M20 3h20M8 9h44q5 0 5 5v30q0 5-5 5H8q-5 0-5-5V14q0-5 5-5zM30 19v20M20 29h20"/><path d="M10 51h10M40 51h10" stroke-width="5"/>',
    '删自选': '<path d="M7 5h45v45H7zM17 28h25"/>',
    '功能': '<circle cx="30" cy="28" r="24"/><path d="M19 21h22M19 35h22"/>'
  };
  return `
<style>
  :host { display: grid; grid-template-columns: 248px repeat(4, 1fr); height: 119px; background: #252525; color: #ddd; font-size: 31px; line-height: 42px; overflow: hidden; }
  a { display: flex; flex-direction: column; align-items: center; padding-top: 21px; }
  .dev { color: #94857c; padding-top: 12px; font-size: 32px; line-height: 42px; height: 150px; }
  .dev span { margin-top: 14px; }
  .dev b { font-weight: 400; color: #28e02c; font-size: 36px; margin-top: 16px; }
  a:last-child span { -webkit-mask-image: linear-gradient(transparent 36%, #000 62%); mask-image: linear-gradient(transparent 36%, #000 62%); }
</style>
<a class="dev" href="#device"><svg width="24" height="15" viewBox="0 0 24 15"><path d="M12 0 24 15H0z" fill="#bbb"/></svg><span>专用设备</span><b>-0.25%</b></a>
${Object.entries(ic).map(([n, d]) => `<a href="#"><svg width="60" height="60" viewBox="0 0 60 60" fill="none" stroke="#ddd" stroke-width="3">${d}</svg><span>${n}</span></a>`).join('')}`;
});
</script>
</body>
</html>
